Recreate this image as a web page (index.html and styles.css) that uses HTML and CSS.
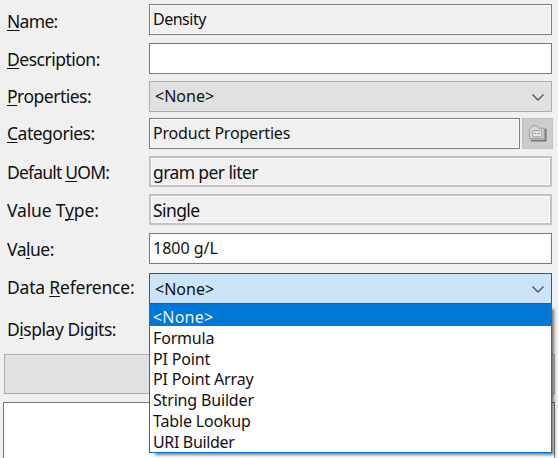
FILE: index.html
```html
<!DOCTYPE html>
<html lang="en">
<head>
<meta charset="utf-8">
<title>Attribute</title>
<link rel="stylesheet" href="styles.css">
</head>
<body>
<main class="panel">
  <div class="row name"><label><span><u>N</u>ame:</span></label><div class="box"><span>Density</span></div></div>
  <div class="row description"><label><span><u>D</u>escription:</span></label><div class="box editable"></div></div>
  <div class="row properties"><label><span><u>P</u>roperties:</span></label>
    <div class="box select"><span>&lt;None&gt;</span><svg class="chevron" viewBox="0 0 14 9"><path d="M1.5 1.5 7 7l5.500-5.500"/></svg></div></div>
  <div class="row categories"><label><span><u>C</u>ategories:</span></label><div class="box"><span>Product Properties</span></div>
    <button class="browse" aria-label="Browse categories"><svg viewBox="0 0 20 20"><path class="shade" d="M3 17.500h15.500V5"/><path class="folder" d="M1.500 15.500V5.500l3-3.500h4.500l2.500 2.500h5.500v11z"/><path class="card" d="M5 7h9.500v6.500H5z"/><path class="dots" d="M7 10h2m1.500 0h2"/></svg></button></div>
  <div class="row uom"><label><span>Default <u>U</u>OM:</span></label><div class="box disabled"><span>gram per liter</span></div></div>
  <div class="row type"><label><span>Value T<u>y</u>pe:</span></label><div class="box disabled"><span>Single</span></div></div>
  <div class="row value"><label><span>Va<u>l</u>ue:</span></label><div class="box editable"><span>1800 g/L</span></div></div>
  <div class="row reference"><label><span>Data <u>R</u>eference:</span></label>
    <div class="box select open"><span>&lt;None&gt;</span><svg class="chevron" viewBox="0 0 14 9"><path d="M1.500 1.500 7 7l5.500-5.500"/></svg>
      <ul class="menu">
        <li class="selected"><span>&lt;None&gt;</span></li>
        <li>Formula</li>
        <li>PI Point</li>
        <li>PI Point Array</li>
        <li>String Builder</li>
        <li>Table Lookup</li>
        <li class="last">URI Builder</li>
      </ul>
    </div></div>
  <div class="row digits"><label><span>D<u>i</u>splay Digits:</span></label></div>
  <div class="wide-button"></div>
  <div class="output"></div>
</main>
</body>
</html>
```
FILE: styles.css
```css
* { box-sizing: border-box; }
body { margin: 0; background: #f0f0f0; color: #111; font: 16px "Noto Sans", "Open Sans", sans-serif; }
.panel { height: 458px; overflow: hidden; padding: 4px 3px 0; display: flex; flex-direction: column; }
.row { display: flex; flex: none; height: 31px; padding: 0 3px 0 4px; margin-bottom: 7px; }
.row label { width: 142px; flex: none; font-size: 17.500px; line-height: 31px; letter-spacing: -.5px; white-space: nowrap; }
u { text-decoration: underline 1px; text-underline-offset: 1.500px; text-decoration-skip-ink: none; }
.box { flex: 1; height: 31px; border: 1px solid #7c7c7c; padding-left: 3px; line-height: 29px; letter-spacing: -.2px; white-space: nowrap; box-shadow: inset 0 0 0 1px #fafafa; }
.editable { background: #fff; letter-spacing: 0; }
.select { position: relative; background: #e1e1e1; border-color: #adadad; box-shadow: none; padding-left: 5px; letter-spacing: 0; }
.disabled { border: 2px solid #c3c3c3; padding-left: 2px; font-size: 17.500px; line-height: 29px; letter-spacing: -.6px; }
.chevron { position: absolute; right: 6px; top: 11px; width: 14px; height: 9px; fill: none; stroke: #555; stroke-width: 1.400; }
.name { margin-bottom: 8px; }
.name .box { letter-spacing: -.5px; }
.name label { padding-top: 2px; letter-spacing: -.7px; }
.description label { padding-top: 1px; }
.properties { margin-bottom: 6px; }
.categories { height: 32px; margin-bottom: 6px; padding-right: 2px; }
.browse { width: 31px; height: 31px; margin: 0 0 0 2px; padding: 5px; border: 1px solid #c1c1c1; background: #ccc; }
.browse svg { display: block; width: 19px; height: 19px; fill: none; }
.browse .shade { stroke: #777; stroke-width: 2; }
.browse .folder { fill: #d8d8d8; stroke: #999; }
.browse .card { fill: #e8e8e8; stroke: #999; }
.browse .dots { stroke: #777; }
.uom label, .type label, .value label { padding-top: 1px; }
.row.uom label { letter-spacing: -.8px; }
.row.type label { letter-spacing: -.15px; }
.type { margin-bottom: 8px; }
.value { margin-bottom: 9px; }
.reference { margin-bottom: 10px; }
.row.reference label { line-height: 28px; letter-spacing: -.2px; }
.open { background: #cce4f7; border-color: #0a64b1; line-height: 31px; }
.menu { position: absolute; z-index: 2; left: -1px; right: -1px; top: 29px; height: 150px; margin: 0; padding: 1px 0 0; list-style: none; background: #fff; border: 1px solid #0078d7; border-top-color: #0a64b1; box-shadow: 4px 4px 3px -2px #0008; }
.menu li { height: 20.800px; line-height: 24px; padding-left: 3px; letter-spacing: -.17px; }
.menu .selected { background: #0078d7; color: #e8f3fc; letter-spacing: .2px; box-shadow: 0 -1px #0078d7; }
.menu .last { letter-spacing: -.35px; }
.row.digits label { letter-spacing: -.48px; }
.wide-button { flex: none; width: 551px; height: 40px; margin: 2px 0 8px 1px; background: #e1e1e1; border: 1px solid #adadad; }
.output { flex: 1; background: #fff; border: 1px solid #777; border-bottom: 0; }
```
